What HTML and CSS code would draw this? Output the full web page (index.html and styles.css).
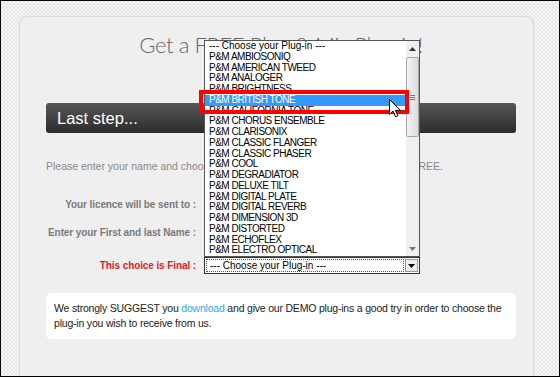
FILE: index.html
```html
<!DOCTYPE html>
<html lang="en">
<head>
    <meta charset="UTF-8">
    <meta name="viewport" content="width=device-width, initial-scale=1.0">
    <title>Get a FREE Plug &amp; Mix Plug-in</title>
    <link rel="stylesheet" href="styles.css">
</head>
<body>

    <div class="screen">
        <div class="card">
            <h1 class="title">Get a FREE Plug &amp; Mix Plug-in!</h1>

            <div class="step-bar">Last step...</div>

            <p class="intro">Please enter your name and choose the Plug &amp; Mix plug-in you want to get for FREE.</p>

            <div class="form-grid">
                <label class="field-label">Your licence will be sent to :</label>
                <input type="text" class="field-input">

                <label class="field-label">Enter your First and last Name :</label>
                <input type="text" class="field-input">

                <label class="field-label final">This choice is Final :</label>
                <div class="plugin-select">
                    <div class="select-box">
                        <span class="select-value">--- Choose your Plug-in ---</span>
                        <span class="select-btn">
                            <svg width="7" height="4" viewBox="0 0 7 4"><path d="M0 0h7L3.5 4z" fill="#000"/></svg>
                        </span>
                    </div>

                    <!-- open list of the select -->
                    <div class="dropdown">
                        <ul class="options">
                            <li class="placeholder">--- Choose your Plug-in ---</li>
                            <li>P&amp;M AMBIOSONIQ</li>
                            <li>P&amp;M AMERICAN TWEED</li>
                            <li>P&amp;M ANALOGER</li>
                            <li>P&amp;M BRIGHTNESS</li>
                            <li class="selected">P&amp;M BRITISH TONE</li>
                            <li>P&amp;M CALIFORNIA TONE</li>
                            <li>P&amp;M CHORUS ENSEMBLE</li>
                            <li>P&amp;M CLARISONIX</li>
                            <li>P&amp;M CLASSIC FLANGER</li>
                            <li>P&amp;M CLASSIC PHASER</li>
                            <li>P&amp;M COOL</li>
                            <li>P&amp;M DEGRADIATOR</li>
                            <li>P&amp;M DELUXE TILT</li>
                            <li>P&amp;M DIGITAL PLATE</li>
                            <li>P&amp;M DIGITAL REVERB</li>
                            <li>P&amp;M DIMENSION 3D</li>
                            <li>P&amp;M DISTORTED</li>
                            <li>P&amp;M ECHOFLEX</li>
                            <li>P&amp;M ELECTRO OPTICAL</li>
                        </ul>
                        <div class="scrollbar">
                            <div class="scroll-btn">
                                <svg width="7" height="4" viewBox="0 0 7 4"><path d="M3.5 0L7 4H0z" fill="#333"/></svg>
                            </div>
                            <div class="scroll-thumb">
                                <span class="grip"></span>
                                <span class="grip"></span>
                                <span class="grip"></span>
                            </div>
                            <div class="scroll-space"></div>
                            <div class="scroll-btn">
                                <svg width="7" height="4" viewBox="0 0 7 4"><path d="M0 0h7L3.5 4z" fill="#777"/></svg>
                            </div>
                        </div>

                        <div class="callout"></div>
                        <svg class="cursor" width="12" height="19" viewBox="0 0 12 19">
                            <path d="M0.5 0.5v15l3.6-3.4 2.5 5.8 2.3-1-2.5-5.6h5z" fill="#fff" stroke="#000" stroke-width="1"/>
                        </svg>
                    </div>
                </div>
            </div>

            <div class="notice">
                We strongly SUGGEST you <a href="#">download</a> and give our DEMO plug-ins a good try in order to choose the plug-in you wish to receive from us.
            </div>
        </div>
    </div>

</body>
</html>
```

FILE: styles.css
```css
* {
    box-sizing: border-box;
    margin: 0;
    padding: 0;
}
body {
    font-family: 'Liberation Sans', Arial, sans-serif;
    background-color: #fff;
}
.screen {
    width: 560px;
    height: 377px;
    border: 1px solid #000;
    overflow: hidden;
    padding: 16px 0 0 19px;
    background-color: #eeeeee;
    background-image: repeating-conic-gradient(#e8e8e8 0 25%, #f3f3f3 0 50%);
    background-size: 4px 4px;
}
.card {
    width: 513px;
    min-height: 420px;
    background-color: #efefef;
    border-radius: 7px 7px 0 0;
    box-shadow: 0 0 2px rgba(0, 0, 0, 0.3);
    padding: 13px 17px 0 26px;
}
.title {
    font-family: 'Lato', sans-serif;
    font-weight: 300;
    font-size: 22px;
    letter-spacing: -0.4px;
    line-height: 30px;
    color: #666;
    text-align: center;
    margin-bottom: 43px;
}
.step-bar {
    height: 30px;
    line-height: 30px;
    padding-left: 11px;
    font-size: 16.5px;
    color: #fff;
    border-radius: 3px;
    background: linear-gradient(#575757, #2b2b2b);
}
.intro {
    margin-top: 25px;
    font-size: 10.5px;
    line-height: 16px;
    color: #8a8a8a;
    white-space: nowrap;
}
.form-grid {
    margin-top: 20px;
    display: grid;
    grid-template-columns: 150px 216px;
    grid-template-rows: 20px 20px 24px;
    column-gap: 8px;
    row-gap: 8px;
    align-items: center;
}
.field-label {
    text-align: right;
    font-size: 10px;
    font-weight: bold;
    letter-spacing: -0.1px;
    color: #7a7a7a;
    white-space: nowrap;
}
.field-label.final {
    color: #e8182b;
    align-self: end;
    line-height: 17px;
}
.field-input {
    height: 20px;
    border: 1px solid #ccc;
}
.plugin-select {
    position: relative;
    align-self: end;
}
.select-box {
    height: 17px;
    border: 1px solid #333;
    background-color: #fff;
    display: flex;
    padding: 1px;
}
.select-value {
    flex: 1;
    border: 1px dotted #555;
    font-size: 10px;
    line-height: 11px;
    padding-left: 3px;
    color: #000;
}
.select-btn {
    width: 13px;
    margin-left: 1px;
    border: 1px solid #999;
    background-color: #eee;
    display: flex;
    justify-content: center;
    align-items: center;
}
.dropdown {
    position: absolute;
    left: 0;
    bottom: 100%;
    width: 216px;
    height: 217px;
    border: 1px solid #555;
    background-color: #fff;
    display: flex;
}
.options {
    flex: 1;
    list-style: none;
}
.options li {
    height: 10.75px;
    line-height: 10.75px;
    padding-left: 4px;
    font-size: 10px;
    letter-spacing: -0.5px;
    color: #000;
    white-space: nowrap;
}
.options li.placeholder {
    letter-spacing: 0;
}
.options li.selected {
    background-color: #3399ff;
    color: #fff;
}
.scrollbar {
    width: 13px;
    background-color: #f0f0f0;
    display: flex;
    flex-direction: column;
}
.scroll-btn {
    height: 15px;
    display: flex;
    justify-content: center;
    align-items: center;
}
.scroll-thumb {
    height: 80px;
    margin-top: 1px;
    border: 1px solid #a8a8a8;
    border-radius: 2px;
    background: linear-gradient(to right, #f4f4f4, #dcdcdc);
    display: flex;
    flex-direction: column;
    justify-content: center;
    align-items: center;
    gap: 1px;
}
.grip {
    width: 5px;
    height: 1px;
    background-color: #777;
}
.scroll-space {
    flex: 1;
}
.callout {
    position: absolute;
    left: -6px;
    top: 49px;
    width: 210px;
    height: 24px;
    border: 4px solid #ff0000;
}
.cursor {
    position: absolute;
    left: 184px;
    top: 58px;
}
.notice {
    margin-top: 19px;
    background-color: #fff;
    border-radius: 5px;
    padding: 8px;
    font-size: 10.5px;
    letter-spacing: -0.2px;
    line-height: 15px;
    color: #222;
}
.notice a {
    color: #3aa6e2;
    text-decoration: none;
}
```
